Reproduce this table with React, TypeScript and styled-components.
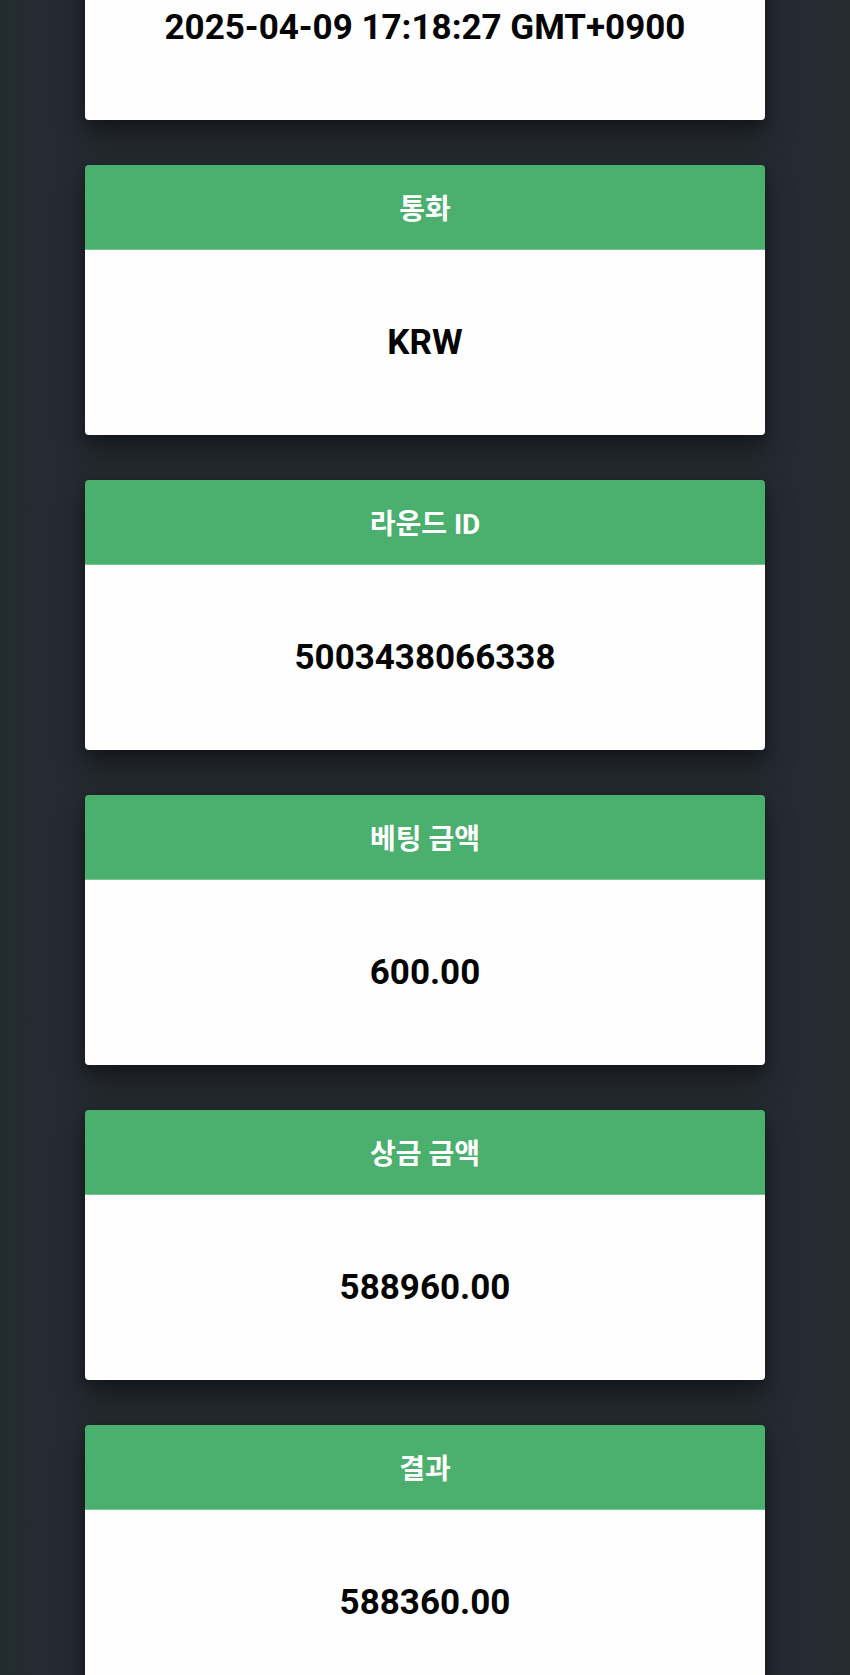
import React from 'react';
import styled, { createGlobalStyle } from 'styled-components';

const GlobalStyle = createGlobalStyle`
  html, body {
    margin: 0;
    padding: 0;
  }
  body {
    background: linear-gradient(
      90deg,
      #232c2d 0%,
      #262b33 6%,
      #252a31 10%,
      #252a31 90%,
      #262b33 94%,
      #242c2e 100%
    );
    font-family: Roboto, 'Noto Sans CJK KR', 'Noto Sans', sans-serif;
    overflow: hidden;
  }
`;

const Page = styled.div`
  display: flex;
  flex-direction: column;
  gap: 45px;
  padding: 0 85px 60px;
  margin-top: -150px;
`;

const Card = styled.section`
  display: flex;
  flex-direction: column;
  border-radius: 4px;
  overflow: hidden;
  box-shadow: 0 16px 30px rgba(0, 0, 0, 0.38), 0 4px 10px rgba(0, 0, 0, 0.22);
`;

const CardHeader = styled.div`
  height: 84px;
  display: flex;
  align-items: center;
  justify-content: center;
  background: #4baf6e;
  border-bottom: 1px solid #74c791;
  color: #ffffff;
  font-family: Roboto, 'Noto Sans CJK KR', sans-serif;
  font-size: 28px;
  font-weight: 700;
`;

const CardBody = styled.div`
  height: 185px;
  display: flex;
  align-items: center;
  justify-content: center;
  background: #fdfefd;
  color: #050505;
  font-family: Roboto, 'Noto Sans CJK KR', sans-serif;
  font-size: 35px;
  font-weight: 700;
`;

const rows = [
  { label: '시간', value: '2025-04-09 17:18:27 GMT+0900' },
  { label: '통화', value: 'KRW' },
  { label: '라운드 ID', value: '5003438066338' },
  { label: '베팅 금액', value: '600.00' },
  { label: '상금 금액', value: '588960.00' },
  { label: '결과', value: '588360.00' },
];

export default function App(): React.ReactElement {
  return (
    <>
      <GlobalStyle />
      <Page>
        {rows.map((row) => (
          <Card key={row.label}>
            <CardHeader>{row.label}</CardHeader>
            <CardBody>{row.value}</CardBody>
          </Card>
        ))}
      </Page>
    </>
  );
}
